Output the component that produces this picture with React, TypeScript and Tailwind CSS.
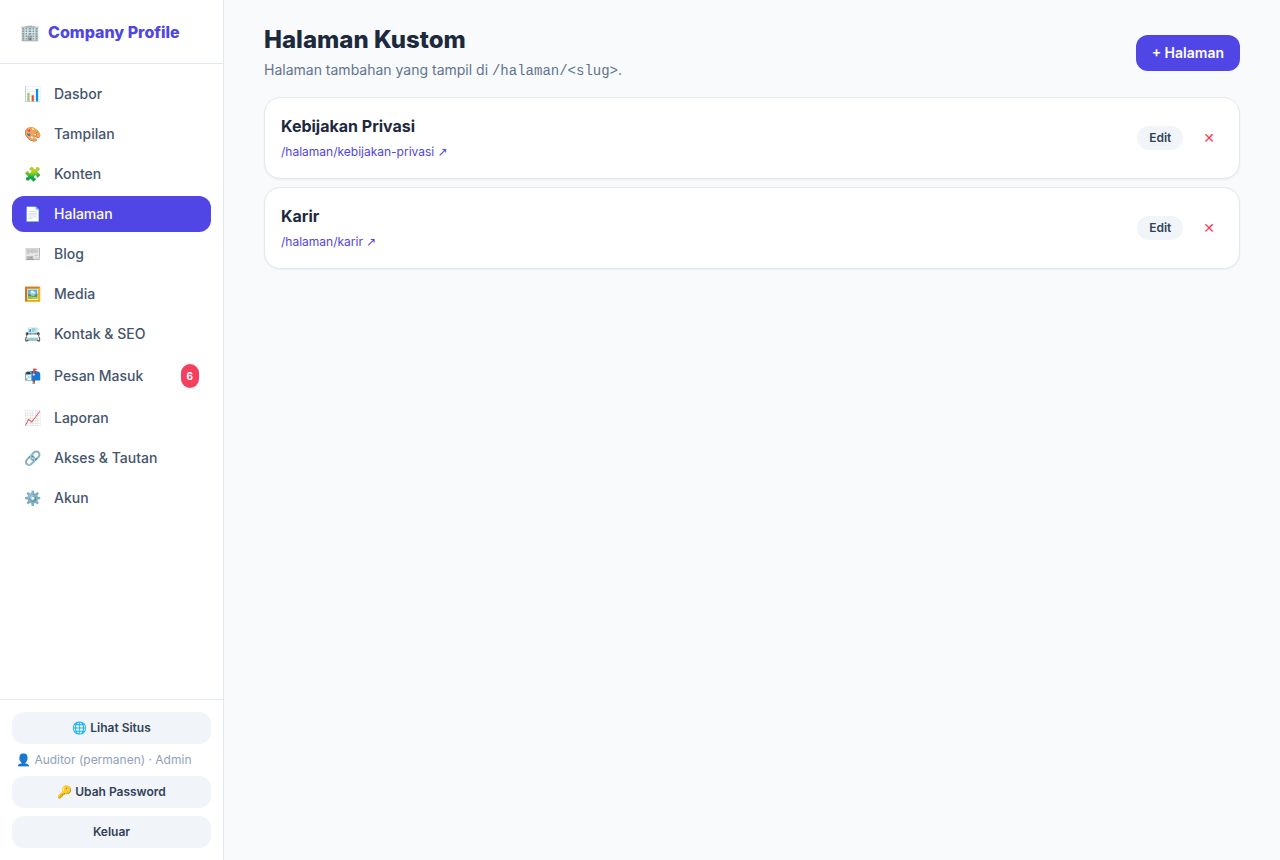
import React from "react";
import clsx from "clsx";

const MENU = [
  { icon: "📊", label: "Dasbor", href: "#dasbor" },
  { icon: "🎨", label: "Tampilan", href: "#tampilan" },
  { icon: "🧩", label: "Konten", href: "#konten" },
  { icon: "📄", label: "Halaman", href: "#halaman" },
  { icon: "📰", label: "Blog", href: "#blog" },
  { icon: "🖼️", label: "Media", href: "#media" },
  { icon: "📇", label: "Kontak & SEO", href: "#kontak" },
  { icon: "📬", label: "Pesan Masuk", href: "#pesan", badge: 6 },
  { icon: "📈", label: "Laporan", href: "#laporan" },
  { icon: "🔗", label: "Akses & Tautan", href: "#akses" },
  { icon: "⚙️", label: "Akun", href: "#akun" },
];

const PAGES = [
  { title: "Kebijakan Privasi", slug: "kebijakan-privasi" },
  { title: "Karir", slug: "karir" },
];

const sideButton =
  "block w-full rounded-xl bg-slate-100 px-3 py-2 text-center text-xs font-semibold text-slate-700 hover:bg-slate-200";

const Sidebar = ({ active }: { active: string }) => (
  <aside className="sticky top-0 flex h-screen w-56 shrink-0 flex-col border-r border-slate-200 bg-white">
    <div className="flex h-16 items-center gap-2 border-b border-slate-200 px-5 font-extrabold text-[#4f46e5]">
      <span>🏢</span>
      <span>Company Profile</span>
    </div>

    <nav className="flex flex-1 flex-col gap-1 overflow-y-auto p-3">
      {MENU.map(({ icon, label, href, badge }) => (
        <a
          key={label}
          href={href}
          className={clsx(
            "flex items-center gap-3 rounded-xl px-3 py-2 text-sm font-medium",
            label === active
              ? "bg-[#4f46e5] text-white"
              : "text-slate-600 hover:bg-slate-100"
          )}
        >
          <span className="w-[18px]">{icon}</span>
          <span className="flex-1">{label}</span>
          {badge && (
            <span className="rounded-full bg-[#f43f5e] px-1.5 py-1 text-[10px] leading-4 font-bold text-white">
              {badge}
            </span>
          )}
        </a>
      ))}
    </nav>

    <div className="flex flex-col gap-2 border-t border-slate-200 p-3">
      <a href="#situs" className={sideButton}>
        🌐 Lihat Situs
      </a>
      <div className="px-1 text-xs text-slate-400">
        👤 Auditor (permanen) · Admin
      </div>
      <button type="button" className={sideButton}>
        🔑 Ubah Password
      </button>
      <button type="button" className={sideButton}>
        Keluar
      </button>
    </div>
  </aside>
);

const PageCard = ({ title, slug }: { title: string; slug: string }) => (
  <li className="flex items-center justify-between gap-4 rounded-2xl border border-slate-200 bg-white p-4 shadow-xs">
    <div>
      <h2 className="font-bold text-slate-800">{title}</h2>
      <a
        href={`#/halaman/${slug}`}
        className="text-xs text-[#4f46e5] hover:underline"
      >
        /halaman/{slug}{" "}
        <span className="font-['DejaVu_Sans',sans-serif]">↗</span>
      </a>
    </div>
    <div className="flex items-center gap-3">
      <button
        type="button"
        className="rounded-full bg-slate-100 px-3 py-1 text-xs font-semibold text-slate-700 hover:bg-slate-200"
      >
        Edit
      </button>
      <button
        type="button"
        aria-label={`Hapus ${title}`}
        className="rounded-lg px-2 py-1 text-sm text-[#f43f5e] hover:bg-rose-50"
      >
        <span className="font-['DejaVu_Sans',sans-serif]">✕</span>
      </button>
    </div>
  </li>
);

const App = () => (
  <div className="flex min-h-screen bg-slate-50 font-[Inter,sans-serif] text-slate-800">
    <Sidebar active="Halaman" />

    <main className="min-w-0 flex-1 px-10 py-6">
      <header className="mb-4 flex items-center justify-between gap-4">
        <div>
          <h1 className="text-2xl font-extrabold">Halaman Kustom</h1>
          <p className="mt-1 text-sm text-slate-500">
            Halaman tambahan yang tampil di{" "}
            <code className="font-['Liberation_Mono',monospace]">
              /halaman/&lt;slug&gt;
            </code>
            .
          </p>
        </div>
        <button
          type="button"
          className="rounded-xl bg-[#4f46e5] px-4 py-2 text-sm font-semibold text-white hover:bg-indigo-700"
        >
          + Halaman
        </button>
      </header>

      <ul className="flex flex-col gap-2">
        {PAGES.map((page) => (
          <PageCard key={page.slug} {...page} />
        ))}
      </ul>
    </main>
  </div>
);

export default App;
